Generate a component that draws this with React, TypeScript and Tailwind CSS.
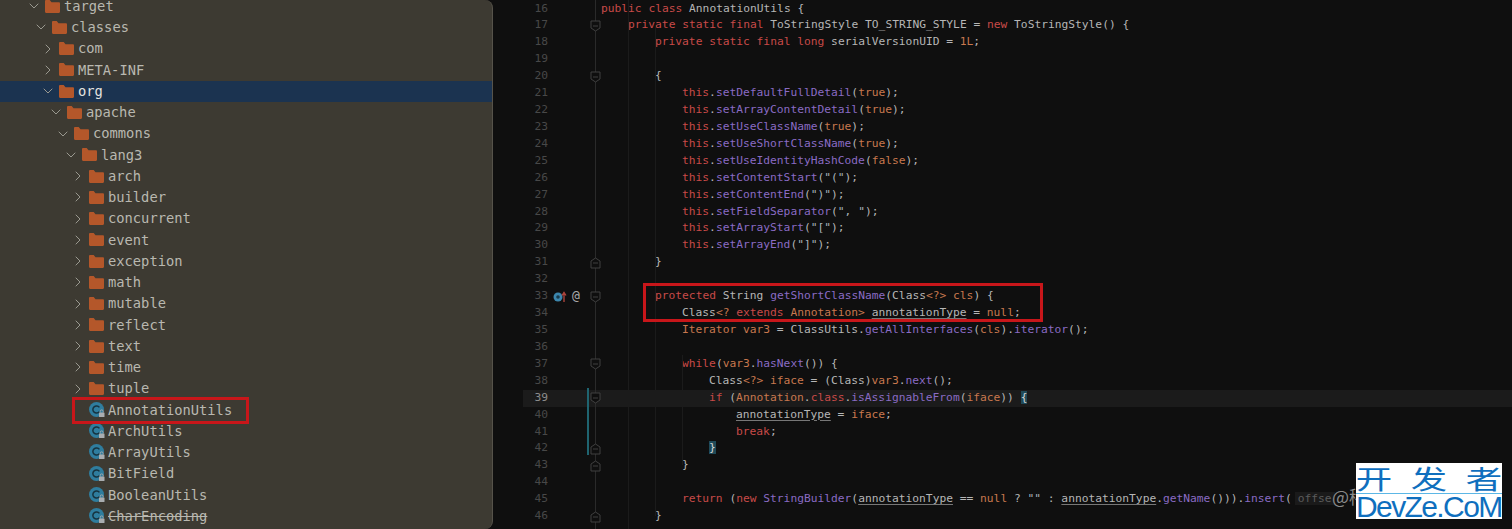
import React from 'react';
import { ChevronDown, ChevronRight } from 'lucide-react';

// Project tree rows: level, label, kind
type TreeRow = { level: number; label: string; kind: 'open' | 'closed' | 'class'; selected?: boolean; strike?: boolean };

const treeRows: TreeRow[] = [
  { level: 0, label: 'target', kind: 'open' },
  { level: 1, label: 'classes', kind: 'open' },
  { level: 2, label: 'com', kind: 'closed' },
  { level: 2, label: 'META-INF', kind: 'closed' },
  { level: 2, label: 'org', kind: 'open', selected: true },
  { level: 3, label: 'apache', kind: 'open' },
  { level: 4, label: 'commons', kind: 'open' },
  { level: 5, label: 'lang3', kind: 'open' },
  { level: 6, label: 'arch', kind: 'closed' },
  { level: 6, label: 'builder', kind: 'closed' },
  { level: 6, label: 'concurrent', kind: 'closed' },
  { level: 6, label: 'event', kind: 'closed' },
  { level: 6, label: 'exception', kind: 'closed' },
  { level: 6, label: 'math', kind: 'closed' },
  { level: 6, label: 'mutable', kind: 'closed' },
  { level: 6, label: 'reflect', kind: 'closed' },
  { level: 6, label: 'text', kind: 'closed' },
  { level: 6, label: 'time', kind: 'closed' },
  { level: 6, label: 'tuple', kind: 'closed' },
  { level: 6, label: 'AnnotationUtils', kind: 'class' },
  { level: 6, label: 'ArchUtils', kind: 'class' },
  { level: 6, label: 'ArrayUtils', kind: 'class' },
  { level: 6, label: 'BitField', kind: 'class' },
  { level: 6, label: 'BooleanUtils', kind: 'class' },
  { level: 6, label: 'CharEncoding', kind: 'class', strike: true },
];

const FolderIcon = () => (
  <svg width="15" height="13" viewBox="0 0 15 13" className="shrink-0">
    <path d="M0 1.2C0 .6.5 0 1.1 0h3.6l1.8 2.2h7.4c.6 0 1.1.5 1.1 1.1v8.5c0 .6-.5 1.2-1.1 1.2H1.1C.5 13 0 12.4 0 11.8z" fill="#b4572a" />
  </svg>
);

const ClassIcon = () => (
  <svg width="16" height="16" viewBox="0 0 16 16" className="shrink-0">
    <circle cx="7.5" cy="7.5" r="7.5" fill="#2f7d9e" />
    <path d="M10.4 5.4A3.6 3.6 0 1 0 10.4 9.6" fill="none" stroke="#16333f" strokeWidth="1.5" />
    <rect x="10" y="10.5" width="5.5" height="4.5" rx=".6" fill="#a9adb0" />
    <path d="M11.2 10.5V9.4a1.5 1.5 0 0 1 3 0v1.1" fill="none" stroke="#a9adb0" strokeWidth=".9" />
  </svg>
);

const treePad = ['pl-[27px]', 'pl-[34px]', 'pl-[41px]', 'pl-[49px]', 'pl-[56px]', 'pl-[64px]', 'pl-[71px]'];

const TreeLine = ({ row }: { row: TreeRow }) => (
  <div className={`flex h-[21.25px] items-center ${treePad[row.level]} ${row.selected ? 'bg-[#1b3350] text-[#e4e4e0]' : 'text-[#b9b8b0]'}`}>
    <span className="flex w-[14px] shrink-0 items-center justify-center">
      {row.kind === 'open' && <ChevronDown size={16} strokeWidth={1.5} className="shrink-0 text-[#9a9990]" />}
      {row.kind === 'closed' && <ChevronRight size={16} strokeWidth={1.5} className="shrink-0 text-[#9a9990]" />}
    </span>
    <span className="ml-[4px] flex w-[19px] shrink-0 items-center">
      {row.kind === 'class' ? <ClassIcon /> : <FolderIcon />}
    </span>
    <span className={row.strike ? 'line-through' : ''}>{row.label}</span>
  </div>
);

// syntax colours
const kw = 'text-[#c84a48]';
const fn = 'text-[#8a6bc4]';
const tx = 'text-[#b6b6b6]';
const vr = 'text-[#c8784e]';
const st = 'text-[#a8b4bc]';
const un = 'text-[#b6b6b6] underline decoration-[#777] underline-offset-2';

type Seg = [string, string];
type CodeLine = { n: number; indent: number; segs: Seg[]; fold?: 'open' | 'close' };

const indents = ['', 'pl-[27px]', 'pl-[54px]', 'pl-[81px]', 'pl-[108px]', 'pl-[135px]'];

const setter = (name: string, arg: Seg[]): Seg[] => [[kw, 'this'], [tx, '.'], [fn, name], [tx, '('], ...arg, [tx, ');']];

const codeLines: CodeLine[] = [
  { n: 16, indent: 0, segs: [[kw, 'public class '], [tx, 'AnnotationUtils {']] },
  { n: 17, indent: 1, fold: 'open', segs: [[kw, 'private static final '], [tx, 'ToStringStyle TO_STRING_STYLE = '], [kw, 'new '], [tx, 'ToStringStyle() {']] },
  { n: 18, indent: 2, segs: [[kw, 'private static final long '], [tx, 'serialVersionUID = '], [vr, '1L'], [tx, ';']] },
  { n: 19, indent: 0, segs: [] },
  { n: 20, indent: 2, fold: 'open', segs: [[tx, '{']] },
  { n: 21, indent: 3, segs: setter('setDefaultFullDetail', [[vr, 'true']]) },
  { n: 22, indent: 3, segs: setter('setArrayContentDetail', [[vr, 'true']]) },
  { n: 23, indent: 3, segs: setter('setUseClassName', [[vr, 'true']]) },
  { n: 24, indent: 3, segs: setter('setUseShortClassName', [[vr, 'true']]) },
  { n: 25, indent: 3, segs: setter('setUseIdentityHashCode', [[vr, 'false']]) },
  { n: 26, indent: 3, segs: setter('setContentStart', [[st, '"("']]) },
  { n: 27, indent: 3, segs: setter('setContentEnd', [[st, '")"']]) },
  { n: 28, indent: 3, segs: setter('setFieldSeparator', [[st, '", "']]) },
  { n: 29, indent: 3, segs: setter('setArrayStart', [[st, '"["']]) },
  { n: 30, indent: 3, segs: setter('setArrayEnd', [[st, '"]"']]) },
  { n: 31, indent: 2, fold: 'close', segs: [[tx, '}']] },
  { n: 32, indent: 0, segs: [] },
  { n: 33, indent: 2, fold: 'open', segs: [[kw, 'protected '], [tx, 'String '], [fn, 'getShortClassName'], [tx, '(Class'], [vr, '<?>'], [vr, ' cls'], [tx, ') {']] },
  { n: 34, indent: 3, segs: [[tx, 'Class'], [vr, '<? '], [kw, 'extends '], [vr, 'Annotation> '], [un, 'annotationType'], [tx, ' = '], [vr, 'null'], [tx, ';']] },
  { n: 35, indent: 3, segs: [[vr, 'Iterator var3'], [tx, ' = ClassUtils.'], [fn, 'getAllInterfaces'], [tx, '('], [vr, 'cls'], [tx, ').'], [fn, 'iterator'], [tx, '();']] },
  { n: 36, indent: 0, segs: [] },
  { n: 37, indent: 3, fold: 'open', segs: [[kw, 'while'], [tx, '('], [vr, 'var3'], [tx, '.'], [fn, 'hasNext'], [tx, '()) {']] },
  { n: 38, indent: 4, segs: [[tx, 'Class'], [vr, '<?> iface'], [tx, ' = (Class)'], [vr, 'var3'], [tx, '.'], [fn, 'next'], [tx, '();']] },
  { n: 39, indent: 4, fold: 'open', segs: [[kw, 'if '], [tx, '('], [vr, 'Annotation'], [tx, '.'], [kw, 'class'], [tx, '.'], [fn, 'isAssignableFrom'], [tx, '('], [vr, 'iface'], [tx, ')) '], ['text-[#d5d5d5] bg-[#1f4a58]', '{']] },
  { n: 40, indent: 5, segs: [[un, 'annotationType'], [tx, ' = '], [vr, 'iface'], [tx, ';']] },
  { n: 41, indent: 5, segs: [[kw, 'break'], [tx, ';']] },
  { n: 42, indent: 4, fold: 'close', segs: [['text-[#d5d5d5] bg-[#1f4a58]', '}']] },
  { n: 43, indent: 3, fold: 'close', segs: [[tx, '}']] },
  { n: 44, indent: 0, segs: [] },
  { n: 45, indent: 3, segs: [[kw, 'return '], [tx, '('], [kw, 'new '], [fn, 'StringBuilder'], [tx, '('], [un, 'annotationType'], [tx, ' == '], [vr, 'null'], [tx, ' ? '], [st, '""'], [tx, ' : '], [un, 'annotationType'], [tx, '.'], [fn, 'getName'], [tx, '())).'], [fn, 'insert'], [tx, '(']] },
  { n: 46, indent: 2, fold: 'close', segs: [[tx, '}']] },
];

const FoldMark = ({ type }: { type: 'open' | 'close' }) => (
  <svg width="11" height="12" viewBox="0 0 11 12">
    {type === 'open' ? (
      <path d="M1 1h9v7l-4.5 3L1 8z" fill="#0f0f0f" stroke="#404040" />
    ) : (
      <path d="M1 11h9V4L5.500 1 1 4z" fill="#0f0f0f" stroke="#404040" />
    )}
    <path d="M3 6h5" stroke="#404040" />
  </svg>
);

const Line = ({ line }: { line: CodeLine }) => (
  <div className={`flex h-[16.93px] items-center leading-[16.93px] whitespace-pre ${line.n === 39 ? 'bg-[#1b1b1b]' : ''}`}>
    <span className={`w-[25px] shrink-0 text-right ${line.n === 39 ? 'text-[#8c8c8c]' : 'text-[#484848]'}`}>{line.n}</span>
    <span className="flex w-[42px] shrink-0 items-center pl-[5px]">
      {line.n === 33 && (
        <>
          <svg width="14" height="12" viewBox="0 0 14 12">
            <circle cx="5" cy="6" r="4.500" fill="#3c86ad" />
            <circle cx="5" cy="6" r="1.800" fill="#173a4c" />
            <path d="M11 11V3M9 4.500 11 1.500l2 3" fill="none" stroke="#b5473f" strokeWidth="1.300" />
          </svg>
          <span className="ml-[5px] text-[13px] text-[#a8a8a8]">@</span>
        </>
      )}
    </span>
    <span className="relative z-10 flex w-[11px] shrink-0 items-center">{line.fold && <FoldMark type={line.fold} />}</span>
    <span className={indents[line.indent]}>
      {line.segs.map((seg, i) => (
        <span key={i} className={seg[0]}>{seg[1]}</span>
      ))}
      {line.n === 45 && <span className="ml-[3px] bg-[#1a1a1a] px-[3px] text-[#5c5c5c]">offse</span>}
    </span>
  </div>
);

const App: React.FC = () => {
  return (
    <div className="relative flex h-[529px] w-[1512px] overflow-hidden bg-[#0f0f0f]">
      {/* Project tree */}
      <aside className="h-full w-[493px] shrink-0 overflow-hidden rounded-r-lg border-r border-[#56534a] bg-[#3d3a32] font-['DejaVu_Sans_Mono',monospace] text-[13.75px]">
        <div className="-mt-[4.5px]">
          {treeRows.map((row) => (
            <TreeLine key={row.label} row={row} />
          ))}
        </div>
      </aside>

      {/* Editor */}
      <main className="relative h-full flex-1 overflow-hidden pl-[30px] font-['DejaVu_Sans_Mono',monospace] text-[11.25px]">
        <div className="mt-[0.5px]">
          {codeLines.map((line) => (
            <Line key={line.n} line={line} />
          ))}
        </div>
        {/* fold line, indent guides, change bar */}
        <div className="absolute top-0 bottom-0 left-[102px] w-px bg-[#2a2a2a]" />
        <div className="absolute top-0 bottom-0 left-[135px] w-px bg-[#1b1b1b]" />
        <div className="absolute top-[25px] bottom-[13px] left-[162px] w-px bg-[#1b1b1b]" />
        <div className="absolute top-[355px] left-[189px] h-[110px] w-px bg-[#1b1b1b]" />
        <div className="absolute top-[388px] left-[94px] h-[67px] w-[1.5px] bg-[#1f6470]" />
        <span className="absolute top-[483px] left-[839px] text-[18px] text-[#8a8a8a] font-['Noto_Sans_CJK_SC',sans-serif]">@稀</span>
      </main>

      {/* Red callouts */}
      <div className="absolute top-[397px] left-[72px] h-[27px] w-[177px] border-[3px] border-[#c8161a]" />
      <div className="absolute top-[283px] left-[643px] h-[39px] w-[400px] border-[3px] border-[#c8161a]" />

      {/* Watermark */}
      <div className="absolute top-[463px] left-[1356px] flex h-[56px] w-[146px] flex-col bg-white text-[#0f6fbe]">
        <div className="flex h-[30px] justify-between px-[5px] font-['Noto_Sans_CJK_SC',sans-serif] text-[26px] leading-[30px]">
          <span className="scale-x-[1.4]">开</span>
          <span className="scale-x-[1.4]">发</span>
          <span className="scale-x-[1.4]">者</span>
        </div>
        <div className="h-[1px] bg-[#5cb7e6]" />
        <div className="font-['Liberation_Sans',sans-serif] text-[30px] leading-[25px] tracking-[-1.6px]">DevZe.CoM</div>
      </div>
    </div>
  );
};

export default App;
